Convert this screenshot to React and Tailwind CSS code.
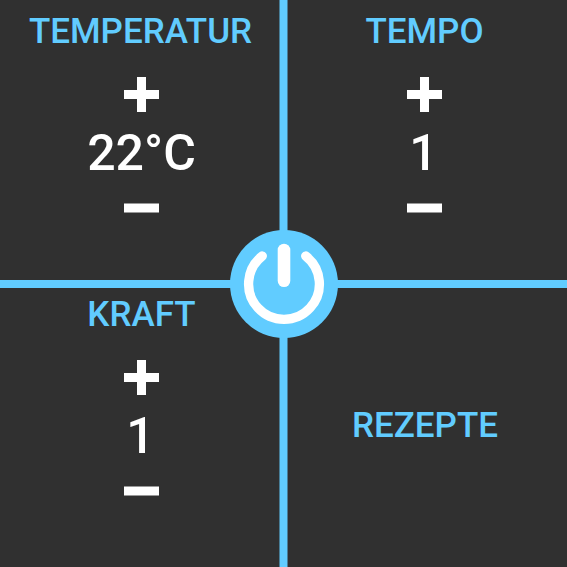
function Plus() {
  return (
    <svg className="block h-[35px] w-[35px] shrink-0" viewBox="0 0 35 35" fill="#fff">
      <path d="M13 0h9v13h13v9H22v13h-9V22H0v-9h13z" />
    </svg>
  );
}

function Minus() {
  return (
    <svg className="block h-[10px] w-[35px] shrink-0" viewBox="0 0 35 10" fill="#fff">
      <rect y="0.5" width="35" height="9" />
    </svg>
  );
}

function Control({ label, value, labelClass = "", valueClass = "" }) {
  return (
    <section className="flex w-[283px] flex-col items-center pt-[10px]">
      <h2 className={`h-[44px] text-[35px] leading-[44px] font-medium text-[#61ccff] ${labelClass}`}>{label}</h2>
      <button className="mt-[23px]" aria-label="+"><Plus /></button>
      <div className={`mt-[10px] h-[62px] text-[50px] leading-[62px] font-medium text-white ${valueClass}`}>{value}</div>
      <button className="mt-[19px]" aria-label="-"><Minus /></button>
    </section>
  );
}

export default function App() {
  return (
    <main className="relative grid h-[567px] w-[567px] grid-cols-[283px_284px] grid-rows-[283px_284px] overflow-hidden bg-[#303030] font-['Roboto',sans-serif]">
      <Control label="TEMPERATUR" value="22°C" labelClass="pr-[2px]" />
      <Control label="TEMPO" value="1" valueClass="pr-[2px]" />
      <Control label="KRAFT" value="1" valueClass="pr-[2px]" />
      <section className="flex items-center justify-center pt-[2px] text-[35px] leading-[44px] font-medium text-[#61ccff]">REZEPTE</section>
      <svg className="absolute inset-0 h-full w-full" viewBox="0 0 567 567" fill="none">
        <path d="M283.5 0V567M0 284H567" stroke="#61ccff" strokeWidth="8" />
        <circle cx="284" cy="284" r="54" fill="#61ccff" />
        <path d="M262.3 256A35.4 35.4 0 1 0 305.7 256" stroke="#fff" strokeWidth="9.3" strokeLinecap="round" />
        <path d="M284 250V280.8" stroke="#fff" strokeWidth="12.6" strokeLinecap="round" />
      </svg>
    </main>
  );
}
